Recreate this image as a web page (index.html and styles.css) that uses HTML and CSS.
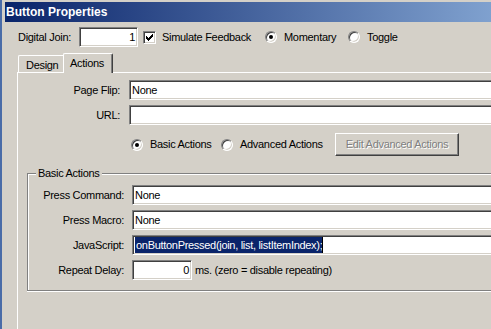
FILE: index.html
```html
<!DOCTYPE html>
<html lang="en">
<head>
  <meta charset="UTF-8" />
  <title>Button Properties</title>
  <link rel="stylesheet" href="styles.css">
</head>
<body>

  <div class="window">
    <div class="titlebar">Button Properties</div>

    <div class="dialog">
      <!-- Fila superior -->
      <div class="top-row">
        <span class="lbl-join">Digital Join:</span>
        <div class="edit num join">1</div>
        <span class="check">
          <svg width="7" height="7" viewBox="0 0 7 7" shape-rendering="crispEdges">
            <path d="M0 2h1v3h-1zM1 3h1v3h-1zM2 4h1v3h-1zM3 3h1v3h-1zM4 2h1v3h-1zM5 1h1v3h-1zM6 0h1v3h-1z" fill="#000"/>
          </svg>
        </span>
        <span class="lbl-sim">Simulate Feedback</span>
        <span class="radio on"></span>
        <span class="opt lbl-mom">Momentary</span>
        <span class="radio"></span>
        <span class="opt">Toggle</span>
      </div>

      <!-- Pestañas -->
      <div class="tabs">
        <div class="tab">Design</div>
        <div class="tab active">Actions</div>
      </div>

      <div class="panel">
        <div class="form">
          <span class="lbl">Page Flip:</span>
          <div class="edit open">None</div>
          <span class="lbl">URL:</span>
          <div class="edit open"></div>
        </div>

        <div class="options">
          <span class="radio on"></span>
          <span class="opt lbl-basic">Basic Actions</span>
          <span class="radio"></span>
          <span class="opt lbl-adv">Advanced Actions</span>
          <div class="button disabled">Edit Advanced Actions</div>
        </div>

        <fieldset class="group">
          <legend>Basic Actions</legend>
          <div class="form small">
            <span class="lbl">Press Command:</span>
            <div class="edit open">None</div>
            <span class="lbl">Press Macro:</span>
            <div class="edit open">None</div>
            <span class="lbl">JavaScript:</span>
            <div class="edit open"><span class="sel">onButtonPressed(join, list, listItemIndex);</span><span class="caret"></span></div>
            <span class="lbl">Repeat Delay:</span>
            <div class="delay">
              <div class="edit num delay-box">0</div>
              <span class="hint">ms. (zero = disable repeating)</span>
            </div>
          </div>
        </fieldset>
      </div>
    </div>
  </div>

</body>
</html>
```

FILE: styles.css
```css
body {
  margin: 0;
  overflow: hidden;
  background: #d4d0c8;
  font-family: 'Liberation Sans', Arial, sans-serif;
  font-size: 11px;
  line-height: 13px;
  letter-spacing: -0.3px;
  color: #000;
}

/* La ventana está recortada por la derecha y por abajo */
.window {
  box-sizing: border-box;
  width: 491px;
  height: 329px;
  border-left: 2px solid #4a6ca8;
  padding: 2px 0 0 3px;
  display: flex;
  flex-direction: column;
}

.titlebar {
  height: 20px;
  flex: none;
  padding-left: 1px;
  display: flex;
  align-items: center;
  background: linear-gradient(to right, #0a246a, #a6caf0 133%);
  color: #fff;
  font-weight: bold;
  font-size: 12px;
  letter-spacing: 0;
}

.dialog {
  flex: 1;
  display: flex;
  flex-direction: column;
  padding: 5px 0 0 12px;
}

/* Fila superior */
.top-row {
  display: flex;
  align-items: center;
  height: 20px;
}

.lbl-join {
  width: 61px;
  margin-left: 1px;
}

.edit {
  height: 20px;
  box-sizing: border-box;
  border: 1px solid;
  border-color: #808080 #fff #fff #808080;
  box-shadow: inset 1px 1px #404040, inset -1px -1px #d4d0c8;
  background: #fff;
  padding: 0 2px;
  display: flex;
  align-items: center;
  white-space: nowrap;
  overflow: hidden;
}

/* Campo cortado por el borde derecho */
.edit.open {
  border-right: 0;
  box-shadow: inset 1px 1px #404040, inset 0 -1px #d4d0c8;
}

.edit.num {
  justify-content: flex-end;
}

.join {
  width: 59px;
}

.check {
  width: 13px;
  height: 13px;
  box-sizing: border-box;
  margin-left: 5px;
  border: 1px solid;
  border-color: #808080 #fff #fff #808080;
  box-shadow: inset 1px 1px #404040, inset -1px -1px #d4d0c8;
  background: #fff;
  display: flex;
  align-items: center;
  justify-content: center;
}

.lbl-sim {
  width: 103px;
  margin-left: 6px;
}

.radio {
  flex: none;
  width: 12px;
  height: 12px;
  box-sizing: border-box;
  border-radius: 50%;
  border: 1px solid;
  border-color: #808080 #fff #fff #808080;
  box-shadow: inset 1px 1px #404040, inset -1px -1px #d4d0c8;
  background: #fff;
  display: flex;
  align-items: center;
  justify-content: center;
}

.radio.on::after {
  content: '';
  width: 4px;
  height: 4px;
  border-radius: 50%;
  background: #000;
}

.opt {
  margin-left: 7px;
}

.lbl-mom {
  width: 64px;
}

/* Pestañas */
.tabs {
  display: flex;
  align-items: flex-end;
  height: 19px;
  margin-top: 6px;
  padding-left: 1px;
}

.tab {
  height: 17px;
  width: 45px;
  box-sizing: border-box;
  border-left: 1px solid #fff;
  border-top: 1px solid #fff;
  border-top-left-radius: 2px;
  padding: 3px 0 0 7px;
}

.tab.active {
  position: relative;
  z-index: 1;
  height: 20px;
  width: 50px;
  margin-bottom: -1px;
  padding-left: 6px;
  border-right: 1px solid #404040;
  border-top-right-radius: 2px;
  box-shadow: inset -1px 0 #808080;
  background: #d4d0c8;
}

.panel {
  flex: 1;
  border-top: 1px solid #fff;
  border-left: 1px solid #fff;
  padding: 7px 0 0 1px;
}

.form {
  display: grid;
  grid-template-columns: 101px 1fr;
  column-gap: 9px;
  row-gap: 5px;
  align-items: center;
}

.form .lbl {
  text-align: right;
}

.options {
  display: flex;
  align-items: center;
  height: 23px;
  margin-top: 8px;
  padding-left: 112px;
}

.lbl-basic {
  width: 71px;
}

.lbl-adv {
  width: 95px;
}

.button {
  width: 124px;
  height: 23px;
  box-sizing: border-box;
  border: 1px solid;
  border-color: #fff #404040 #404040 #fff;
  box-shadow: inset -1px -1px #808080;
  display: flex;
  align-items: center;
  justify-content: center;
}

.button.disabled {
  color: #808080;
  text-shadow: 1px 1px #fff;
}

/* Grupo Basic Actions */
.group {
  margin: 11px 0 0 8px;
  padding: 5px 0 10px 1px;
  border: 1px solid #808080;
  border-right: 0;
  box-shadow: inset 1px 1px #fff, 0 1px #fff;
  min-width: 0;
}

.group legend {
  margin-left: 7px;
  padding: 0 2px;
  background: #d4d0c8;
}

.form.small {
  grid-template-columns: 95px 1fr;
  column-gap: 8px;
}

.sel {
  display: inline-block;
  height: 16px;
  line-height: 16px;
  padding-left: 1px;
  background: #0a246a;
  color: #fff;
}

.caret {
  display: inline-block;
  width: 1px;
  height: 16px;
  background: #000;
}

.delay {
  display: flex;
  align-items: center;
}

.delay-box {
  width: 60px;
}

.hint {
  margin-left: 3px;
}
```
